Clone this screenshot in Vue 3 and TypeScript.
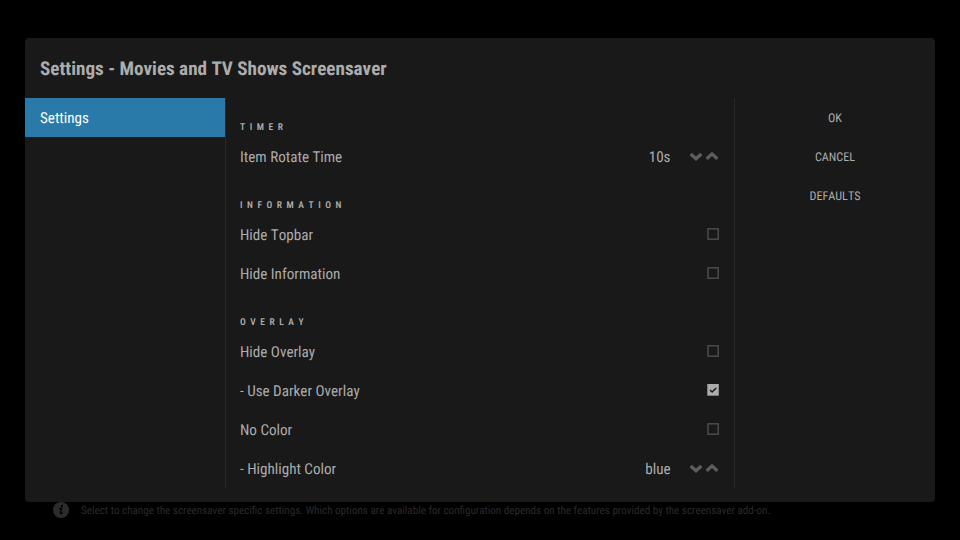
<script setup lang="ts">
import { ref } from 'vue'

type Row = { label: string; value?: string; checked?: boolean }
type Group = { title: string; rows: Row[] }

const groups = ref<Group[]>([
  { title: 'TIMER', rows: [{ label: 'Item Rotate Time', value: '10s' }] },
  {
    title: 'INFORMATION',
    rows: [
      { label: 'Hide Topbar', checked: false },
      { label: 'Hide Information', checked: false },
    ],
  },
  {
    title: 'OVERLAY',
    rows: [
      { label: 'Hide Overlay', checked: false },
      { label: '- Use Darker Overlay', checked: true },
      { label: 'No Color', checked: false },
      { label: '- Highlight Color', value: 'blue' },
    ],
  },
])
const actions = ['OK', 'CANCEL', 'DEFAULTS']

function toggle(row: Row) {
  if (row.value === undefined) row.checked = !row.checked
}
</script>

<template>
  <div class="screen">
    <main class="dialog">
      <h1 class="title"><span>Settings - Movies and TV Shows Screensaver</span></h1>
      <div class="body">
        <nav class="categories">
          <div class="category"><span>Settings</span></div>
        </nav>
        <div class="options">
          <section v-for="group in groups" :key="group.title">
            <h2 class="group-title"><span>{{ group.title }}</span></h2>
            <div v-for="row in group.rows" :key="row.label" class="row" @click="toggle(row)">
              <span class="label">{{ row.label }}</span>
              <template v-if="row.value !== undefined">
                <span class="value">{{ row.value }}</span>
                <svg class="spinner" width="30" height="12" viewBox="0 0 30 12">
                  <path d="M1.7 3 L7 7.8 L12.3 3" />
                  <path d="M17.7 7.7 L23 2.9 L28.3 7.7" />
                </svg>
              </template>
              <svg v-else class="check" width="12" height="12" viewBox="0 0 12 12">
                <template v-if="row.checked">
                  <rect x="0.3" width="11.5" height="11.7" fill="#acacac" />
                  <path d="M3 6 L5.1 8 L9.2 4" fill="none" stroke="#191919" stroke-width="1.6" />
                </template>
                <rect v-else x="1" y="0.8" width="10.2" height="10.4" fill="none" stroke="#4b4b4b" stroke-width="1.5" />
              </svg>
            </div>
          </section>
        </div>
        <div class="actions">
          <div v-for="action in actions" :key="action" class="action"><span>{{ action }}</span></div>
        </div>
      </div>
    </main>
    <footer class="hint">
      <svg width="16" height="16" viewBox="0 0 16 16">
        <circle cx="8" cy="8" r="8" fill="#2c2c2c" />
        <circle cx="8.9" cy="4.2" r="1.1" fill="#000" />
        <path d="M6 6.8 L8.7 6.4 L7.4 11.2 Q7.4 12.2 9.7 10.7" fill="none" stroke="#000" stroke-width="1.3" />
      </svg>
      <span class="hint-text">Select to change the screensaver specific settings. Which options are available for configuration depends on the features provided by the screensaver add-on.</span>
    </footer>
  </div>
</template>

<style>
body {
  background: #000;
}
</style>

<style scoped>
.screen {
  box-sizing: border-box;
  width: 960px;
  height: 540px;
  padding: 38px 25px 0;
  overflow: hidden;
  background: #000;
  color: #acacac;
  font-family: 'Roboto Condensed', Roboto, sans-serif;
  font-stretch: 75%;
  font-kerning: none;
  text-rendering: geometricPrecision;
  white-space: nowrap;
}
.dialog {
  height: 464px;
  border-radius: 4px;
  background: #191919;
}
.title {
  display: flex;
  align-items: center;
  height: 60px;
  margin: 0;
  padding-left: 15px;
  font-size: 19.14px;
  font-weight: 700;
}
.body {
  display: grid;
  grid-template-columns: 200px 510px 200px;
  height: 390px;
}
.category {
  display: flex;
  align-items: center;
  height: 39px;
  padding: 0 15px;
  background: #297aa8;
  color: #fff;
  font-size: 15.1px;
}
.options {
  box-sizing: border-box;
  border: solid #292929;
  border-width: 0 1px;
  padding: 0 15px 0 14px;
}
.group-title {
  display: flex;
  align-items: center;
  height: 39px;
  padding-top: 20px;
  box-sizing: border-box;
  margin: 0;
  font-size: 9.5px;
  font-weight: 600;
  letter-spacing: 4.55px;
}
.row {
  display: flex;
  align-items: center;
  height: 39px;
  font-size: 15.1px;
}
.label {
  flex: 1;
}
.value {
  margin-right: 18.5px;
}
.spinner {
  fill: none;
  stroke: #5d5d5d;
  stroke-width: 3.3;
}
.check {
  display: block;
  margin-bottom: 1px;
}
.action {
  display: flex;
  align-items: center;
  justify-content: center;
  height: 39px;
  font-size: 12.15px;
}
.hint {
  display: flex;
  align-items: center;
  gap: 12px;
  height: 16px;
  padding-left: 28px;
  color: #2a2a2a;
  font-size: 11.1px;
}
.hint-text {
  padding-top: 1px;
}
</style>
